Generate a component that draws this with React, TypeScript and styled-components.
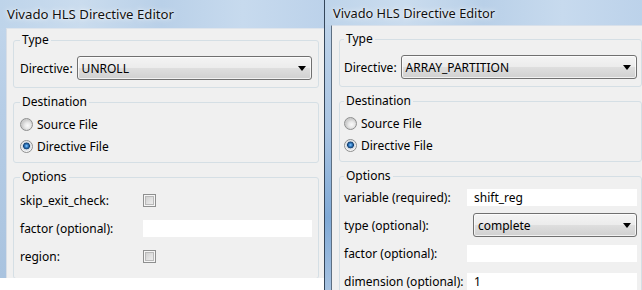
import React from "react";
import styled, { createGlobalStyle, css } from "styled-components";

const GlobalStyle = createGlobalStyle`
  html, body { margin: 0; padding: 0; background: #ffffff; }
  body {
    font-family: "Noto Sans", "Open Sans", "DejaVu Sans", sans-serif;
    font-size: 12px;
    color: #000;
  }
`;

const Screen = styled.div`
  display: flex;
  align-items: flex-start;
  width: 642px;
  height: 290px;
  overflow: hidden;
`;

type Side = "left" | "right";

const Window = styled.div<{ $w: number; $h: number; $side: Side }>`
  width: ${(p) => p.$w}px;
  height: ${(p) => p.$h}px;
  flex-shrink: 0;
  box-sizing: border-box;
  display: flex;
  flex-direction: column;
  overflow: hidden;
  padding-left: 6px;
  ${(p) =>
    p.$side === "left"
      ? css`
          background: linear-gradient(180deg, #c3d7ec 0%, #b6cde6 40%, #a9c3df 100%);
        `
      : css`
          border-left: 1px solid #34465a;
          background: linear-gradient(180deg, #c2d6eb 0%, #a9c4e2 45%, #7fa9d6 75%, #a6c2e1 100%);
        `}
`;

const TitleBar = styled.div<{ $h: number; $indent: number; $size: number }>`
  height: ${(p) => p.$h}px;
  flex-shrink: 0;
  display: flex;
  align-items: center;
  margin-left: -6px;
  padding-left: ${(p) => p.$indent}px;
  font-size: ${(p) => p.$size}px;
  background: linear-gradient(90deg, #bed4ea 0%, #cadcee 25%, #b9d0e8 50%, #c7daee 75%, #bcd2ea 100%);
  color: #111;
  text-shadow: 0 0 6px rgba(255, 255, 255, 0.95), 0 0 2px rgba(255, 255, 255, 0.9);
  white-space: nowrap;
`;

const Client = styled.div<{ $side: Side }>`
  flex: 1;
  box-sizing: border-box;
  background: #f0f0f0;
  display: flex;
  flex-direction: column;
  gap: 6px;
  ${(p) =>
    p.$side === "left"
      ? css`
          border-top: 1px solid #dfe5ec;
          border-left: 1px solid #d8dee6;
          padding: 3px 5px 0 6px;
        `
      : css`
          width: 311px;
          flex: 0 0 auto;
          border-top: 1px solid #d8e0ea;
          border-left: 1px solid #5d6f82;
          padding: 5px 0 0 7px;
        `}
`;

const Group = styled.fieldset<{ $side: Side }>`
  margin: 0;
  border: 1px solid #d5dfe5;
  border-radius: 3px;
  padding: 0 ${(p) => (p.$side === "left" ? "6px" : "4px")} 0;
  min-width: 0;
`;

const Legend = styled.legend`
  padding: 0 2px;
  line-height: 16px;
  height: 16px;
`;

const SelectRow = styled.div`
  display: flex;
  align-items: center;
  gap: 4px;
  margin-top: 8px;
  margin-bottom: 7px;
`;

const Select = styled.div<{ $inset?: number }>`
  flex: 1;
  height: 24px;
  box-sizing: border-box;
  margin-left: ${(p) => p.$inset ?? 0}px;
  border: 1px solid #707070;
  border-radius: 3px;
  background: linear-gradient(180deg, #f4f4f4 0%, #ececec 48%, #dedede 52%, #d0d0d0 100%);
  box-shadow: inset 0 0 0 1px rgba(255, 255, 255, 0.7);
  display: flex;
  align-items: center;
  justify-content: space-between;
  padding: 0 5px 0 4px;
`;

const RadioList = styled.div`
  display: flex;
  flex-direction: column;
  margin-top: 3px;
  margin-bottom: 5px;
`;

const RadioRow = styled.div`
  height: 22px;
  display: flex;
  align-items: center;
  gap: 4px;
`;

const Radio = styled.span<{ $checked?: boolean }>`
  width: 13px;
  height: 13px;
  box-sizing: border-box;
  border-radius: 50%;
  border: 1px solid #8e8f8f;
  flex-shrink: 0;
  background: ${(p) =>
    p.$checked
      ? "radial-gradient(circle at 50% 45%, #8fd0ff 0, #3b86cf 1.4px, #113f70 3.1px, #cfd6de 3.7px, #f6f6f6 5.5px)"
      : "radial-gradient(circle at 60% 60%, #fafafa 0, #e8e8e8 3px, #cdcdcd 5.5px)"};
`;

const OptionRows = styled.div<{ $rowH: number; $shift: number }>`
  display: grid;
  grid-template-columns: 123px 1fr;
  grid-auto-rows: ${(p) => p.$rowH}px;
  align-items: center;
  margin-top: ${(p) => p.$shift}px;
  padding-bottom: 8px;
`;

const FieldLabel = styled.span`
  white-space: nowrap;
`;

const Checkbox = styled.span`
  width: 13px;
  height: 13px;
  box-sizing: border-box;
  border: 1px solid #8e8f8f;
  background: linear-gradient(135deg, #c9c9c9 0%, #e4e4e4 60%, #f2f2f2 100%);
  box-shadow: inset 0 0 0 1px #f6f6f6, inset 0 0 0 2px #b9b9b9;
`;

const TextInput = styled.div`
  height: 17px;
  background: #ffffff;
  display: flex;
  align-items: center;
  padding-left: 7px;
`;

const Arrow = () => (
  <svg width="8" height="5" viewBox="0 0 8 5">
    <polygon points="0,0 8,0 4,5" fill="#000" />
  </svg>
);

const Title = "Vivado HLS Directive Editor";

export default function App() {
  return (
    <>
      <GlobalStyle />
      <Screen>
        <Window $w={324} $h={278} $side="left">
          <TitleBar $h={28} $indent={7} $size={13.2}>{Title}</TitleBar>
          <Client $side="left">
            <Group $side="left">
              <Legend>Type</Legend>
              <SelectRow>
                <FieldLabel>Directive:</FieldLabel>
                <Select>
                  <span>UNROLL</span>
                  <Arrow />
                </Select>
              </SelectRow>
            </Group>
            <Group $side="left">
              <Legend>Destination</Legend>
              <RadioList>
                <RadioRow>
                  <Radio />
                  <span>Source File</span>
                </RadioRow>
                <RadioRow>
                  <Radio $checked />
                  <span>Directive File</span>
                </RadioRow>
              </RadioList>
            </Group>
            <Group $side="left">
              <Legend>Options</Legend>
              <OptionRows $rowH={28} $shift={1}>
                <FieldLabel>skip_exit_check:</FieldLabel>
                <Checkbox />
                <FieldLabel>factor (optional):</FieldLabel>
                <TextInput />
                <FieldLabel>region:</FieldLabel>
                <Checkbox />
              </OptionRows>
            </Group>
          </Client>
        </Window>
        <Window $w={318} $h={290} $side="right">
          <TitleBar $h={25} $indent={8} $size={12.8}>{Title}</TitleBar>
          <Client $side="right">
            <Group $side="right">
              <Legend>Type</Legend>
              <SelectRow>
                <FieldLabel>Directive:</FieldLabel>
                <Select>
                  <span>ARRAY_PARTITION</span>
                  <Arrow />
                </Select>
              </SelectRow>
            </Group>
            <Group $side="right">
              <Legend>Destination</Legend>
              <RadioList>
                <RadioRow>
                  <Radio />
                  <span>Source File</span>
                </RadioRow>
                <RadioRow>
                  <Radio $checked />
                  <span>Directive File</span>
                </RadioRow>
              </RadioList>
            </Group>
            <Group $side="right">
              <Legend>Options</Legend>
              <OptionRows $rowH={28} $shift={-1}>
                <FieldLabel>variable (required):</FieldLabel>
                <TextInput>shift_reg</TextInput>
                <FieldLabel>type (optional):</FieldLabel>
                <Select $inset={6}>
                  <span>complete</span>
                  <Arrow />
                </Select>
                <FieldLabel>factor (optional):</FieldLabel>
                <TextInput />
                <FieldLabel>dimension (optional):</FieldLabel>
                <TextInput>1</TextInput>
              </OptionRows>
            </Group>
          </Client>
        </Window>
      </Screen>
    </>
  );
}
